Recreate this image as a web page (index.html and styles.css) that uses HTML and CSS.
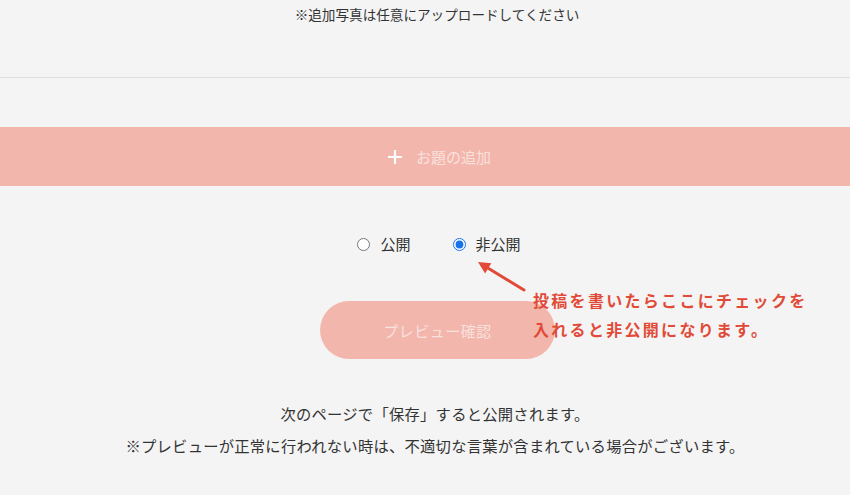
FILE: index.html
```html
<!DOCTYPE html>
<html lang="ja">
<head>
<meta charset="utf-8">
<link rel="stylesheet" href="styles.css">
</head>
<body>
<div class="page">
  <section class="upload-note">
    <p class="note-text">※追加写真は任意にアップロードしてください</p>
  </section>

  <div class="add-bar">
    <div class="add-inner">
      <svg class="plus" width="16" height="16" viewBox="0 0 16 16"><path d="M8 1v14M1 8h14" stroke="#fff" stroke-width="2.2" fill="none"/></svg>
      <span class="add-label">お題の追加</span>
    </div>
  </div>

  <div class="visibility">
    <label class="opt"><input type="radio" name="vis" class="radio"><span>公開</span></label>
    <label class="opt"><input type="radio" name="vis" class="radio" checked><span>非公開</span></label>
  </div>

  <div class="cta">
    <button class="preview-btn">プレビュー確認</button>
    <svg class="arrow" width="60" height="40" viewBox="0 0 60 40">
      <path d="M54 34 L17 11.5" stroke="#e24a38" stroke-width="3" fill="none" stroke-linecap="round"/>
      <path d="M8 6 L15.1 17.6 L21.3 7.2 Z" fill="#e24a38"/>
    </svg>
    <p class="annotation">投稿を書いたらここにチェックを<br>入れると非公開になります。</p>
  </div>

  <div class="footnotes">
    <p>次のページで「保存」すると公開されます。</p>
    <p>※プレビューが正常に行われない時は、不適切な言葉が含まれている場合がございます。</p>
  </div>
</div>
</body>
</html>
```

FILE: styles.css
```css
* { box-sizing: border-box; }
html, body {
  margin: 0;
  padding: 0;
  background: #f4f4f4;
}
body {
  font-family: "Noto Sans CJK JP", "Noto Sans", sans-serif;
  color: #333;
  width: 850px;
  height: 495px;
  overflow: hidden;
}
p { margin: 0; }

.upload-note {
  height: 78px;
  border-bottom: 1px solid #dedede;
  padding-top: 4px;
  padding-left: 24px;
}
.note-text {
  text-align: center;
  font-size: 13.6px;
  line-height: 20px;
  color: #333;
}

.add-bar {
  margin-top: 49px;
  height: 59px;
  background: #f2b6ac;
  display: flex;
  justify-content: center;
  align-items: center;
  padding-left: 28px;
}
.add-inner {
  display: flex;
  align-items: center;
  gap: 13px;
}
.plus { display: block; }
.add-label {
  font-size: 15px;
  color: rgba(255,255,255,0.6);
  line-height: 20px;
}

.visibility {
  margin-top: 48px;
  height: 20px;
  display: flex;
  justify-content: center;
  gap: 42px;
  padding-left: 28px;
}
.opt {
  display: flex;
  align-items: center;
  gap: 10px;
  font-size: 15px;
  line-height: 20px;
  color: #333;
}
.radio {
  margin: 0;
  width: 13px;
  height: 13px;
  accent-color: #1a73e8;
}

.cta {
  position: relative;
  margin-top: 47px;
  height: 58px;
  display: flex;
  justify-content: center;
  padding-left: 25px;
}
.preview-btn {
  width: 235px;
  height: 58px;
  border: none;
  border-radius: 29px;
  background: #f2b6ac;
  color: rgba(255,255,255,0.6);
  font-family: "Noto Sans CJK JP", sans-serif;
  font-size: 15px;
  letter-spacing: 0.5px;
  padding: 0;
}
.arrow {
  position: absolute;
  left: 470px;
  top: -45px;
}
.annotation {
  position: absolute;
  left: 533px;
  top: -15px;
  font-size: 16px;
  font-weight: 700;
  line-height: 29px;
  letter-spacing: 2.3px;
  color: #e24a38;
  white-space: nowrap;
}

.footnotes {
  margin-top: 38px;
  padding-left: 20px;
  text-align: center;
  font-size: 15.3px;
  letter-spacing: 0.25px;
  line-height: 32px;
  color: #333;
}
```
